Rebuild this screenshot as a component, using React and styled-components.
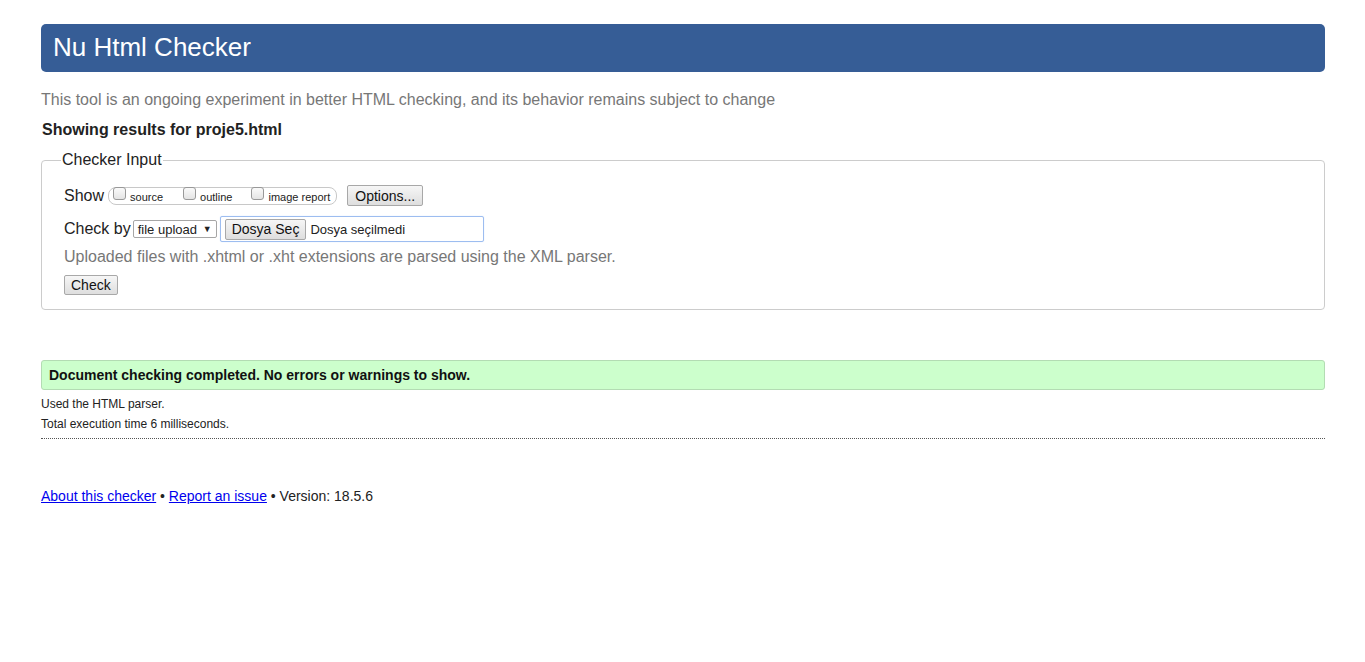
import React from "react";
import styled, { createGlobalStyle } from "styled-components";

const Global = createGlobalStyle`
  html, body { margin: 0; padding: 0; background: #fff; }
  body { font-family: "Liberation Sans", Arial, sans-serif; color: #222; }
`;

const Page = styled.div`
  padding: 24px 40px 0 41px;
`;

const Header = styled.header`
  height: 48px;
  background: #365d96;
  border-radius: 5px;
  display: flex;
  align-items: center;
  padding: 0 12px;
`;

const Title = styled.h1`
  margin: 0;
  font-size: 26px;
  font-weight: normal;
  color: #fff;
  line-height: 1;
  position: relative;
  top: -1px;
`;

const Intro = styled.p`
  margin: 19px 0 0;
  font-size: 16px;
  line-height: 18px;
  color: #777;
`;

const Showing = styled.h2`
  margin: 12px 0 0 1px;
  font-size: 16px;
  line-height: 18px;
  font-weight: bold;
  color: #222;
`;

const Fieldset = styled.fieldset`
  margin: 12px 0 0;
  border: 1px solid #ccc;
  border-radius: 4px;
  padding: 14px 21px 14px 22px;
`;

const Legend = styled.legend`
  font-size: 16px;
  padding: 0 1px;
  margin-left: -3px;
  color: #222;
`;

const Row = styled.div`
  display: flex;
  align-items: center;
  font-size: 16px;
  color: #222;
  margin-top: ${(p) => p.$mt || 0}px;
`;

const Label = styled.span`
  margin-right: ${(p) => p.$mr || 4}px;
`;

const CheckGroup = styled.div`
  display: flex;
  align-items: center;
  border: 1px solid #c8c8c8;
  border-radius: 8px;
  height: 16px;
  padding: 0 6px 0 4px;
  margin-right: 10px;
`;

const CheckItem = styled.label`
  display: flex;
  align-items: center;
  font-size: 11px;
  color: #222;
  margin-right: ${(p) => p.$mr || 0}px;
  position: relative;
  top: 1px;
`;

const Box = styled.span`
  display: inline-block;
  width: 11px;
  height: 11px;
  border: 1px solid #999;
  border-radius: 3px;
  background: linear-gradient(#fafafa, #e4e4e4);
  margin-right: 4px;
  position: relative;
  top: -3px;
`;

const Button = styled.button`
  font-family: "Liberation Sans", Arial, sans-serif;
  font-size: 14px;
  color: #111;
  background: linear-gradient(#f6f6f6, #dedede);
  border: 1px solid #a8a8a8;
  border-radius: 2px;
  height: ${(p) => p.$h || 20}px;
  padding: 0 ${(p) => p.$px || 7}px;
  line-height: 1;
  cursor: pointer;
`;

const Select = styled.div`
  display: flex;
  align-items: center;
  height: 18px;
  width: 84px;
  box-sizing: border-box;
  border: 1px solid #a6a6a6;
  border-radius: 2px;
  background: #fff;
  font-size: 13px;
  padding: 0 4px;
  justify-content: space-between;
  margin-right: 3px;
`;

const Arrow = styled.span`
  font-size: 9px;
`;

const FileInput = styled.div`
  display: flex;
  align-items: center;
  width: 264px;
  height: 26px;
  box-sizing: border-box;
  border: 1px solid #9dbdf0;
  border-radius: 2px;
  padding: 0 4px;
  box-shadow: 0 0 1px #b7d2f7;
  font-size: 13px;
`;

const FileName = styled.span`
  margin-left: 4px;
`;

const Hint = styled.p`
  margin: 6px 0 0;
  font-size: 16px;
  line-height: 18px;
  color: #777;
`;

const Success = styled.div`
  margin-top: 50px;
  height: 28px;
  display: flex;
  align-items: center;
  background: #ccffcc;
  border: 1px solid #b3dcb3;
  border-radius: 3px;
  padding: 0 7px;
  font-size: 14px;
  font-weight: bold;
  color: #111;
`;

const Note = styled.p`
  margin: ${(p) => p.$mt || 0}px 0 0;
  font-size: 12px;
  line-height: 14px;
  color: #222;
`;

const Divider = styled.hr`
  margin: 7px 0 0;
  border: 0;
  border-top: 1px dotted #555;
`;

const Footer = styled.p`
  margin: 49px 0 0;
  font-size: 14px;
  line-height: 16px;
  color: #222;
`;

const Link = styled.a`
  color: #0000ee;
  text-decoration: underline;
`;

export default function App() {
  return (
    <>
      <Global />
      <Page>
        <Header>
          <Title>Nu Html Checker</Title>
        </Header>
        <Intro>
          This tool is an ongoing experiment in better HTML checking, and its behavior remains subject to change
        </Intro>
        <Showing>Showing results for proje5.html</Showing>
        <Fieldset>
          <Legend>Checker Input</Legend>
          <Row $mt={2}>
            <Label $mr={4}>Show</Label>
            <CheckGroup>
              <CheckItem $mr={20}><Box />source</CheckItem>
              <CheckItem $mr={19}><Box />outline</CheckItem>
              <CheckItem><Box />image report</CheckItem>
            </CheckGroup>
            <Button $h={21}>Options...</Button>
          </Row>
          <Row $mt={10}>
            <Label $mr={2}>Check by</Label>
            <Select>
              <span>file upload</span>
              <Arrow>▼</Arrow>
            </Select>
            <FileInput>
              <Button $h={21} $px={6}>Dosya Seç</Button>
              <FileName>Dosya seçilmedi</FileName>
            </FileInput>
          </Row>
          <Hint>Uploaded files with .xhtml or .xht extensions are parsed using the XML parser.</Hint>
          <Row $mt={9}>
            <Button $h={20} $px={6}>Check</Button>
          </Row>
        </Fieldset>
        <Success>Document checking completed. No errors or warnings to show.</Success>
        <Note $mt={7}>Used the HTML parser.</Note>
        <Note $mt={6}>Total execution time 6 milliseconds.</Note>
        <Divider />
        <Footer>
          <Link href="#">About this checker</Link> • <Link href="#">Report an issue</Link> • Version: 18.5.6
        </Footer>
      </Page>
    </>
  );
}
